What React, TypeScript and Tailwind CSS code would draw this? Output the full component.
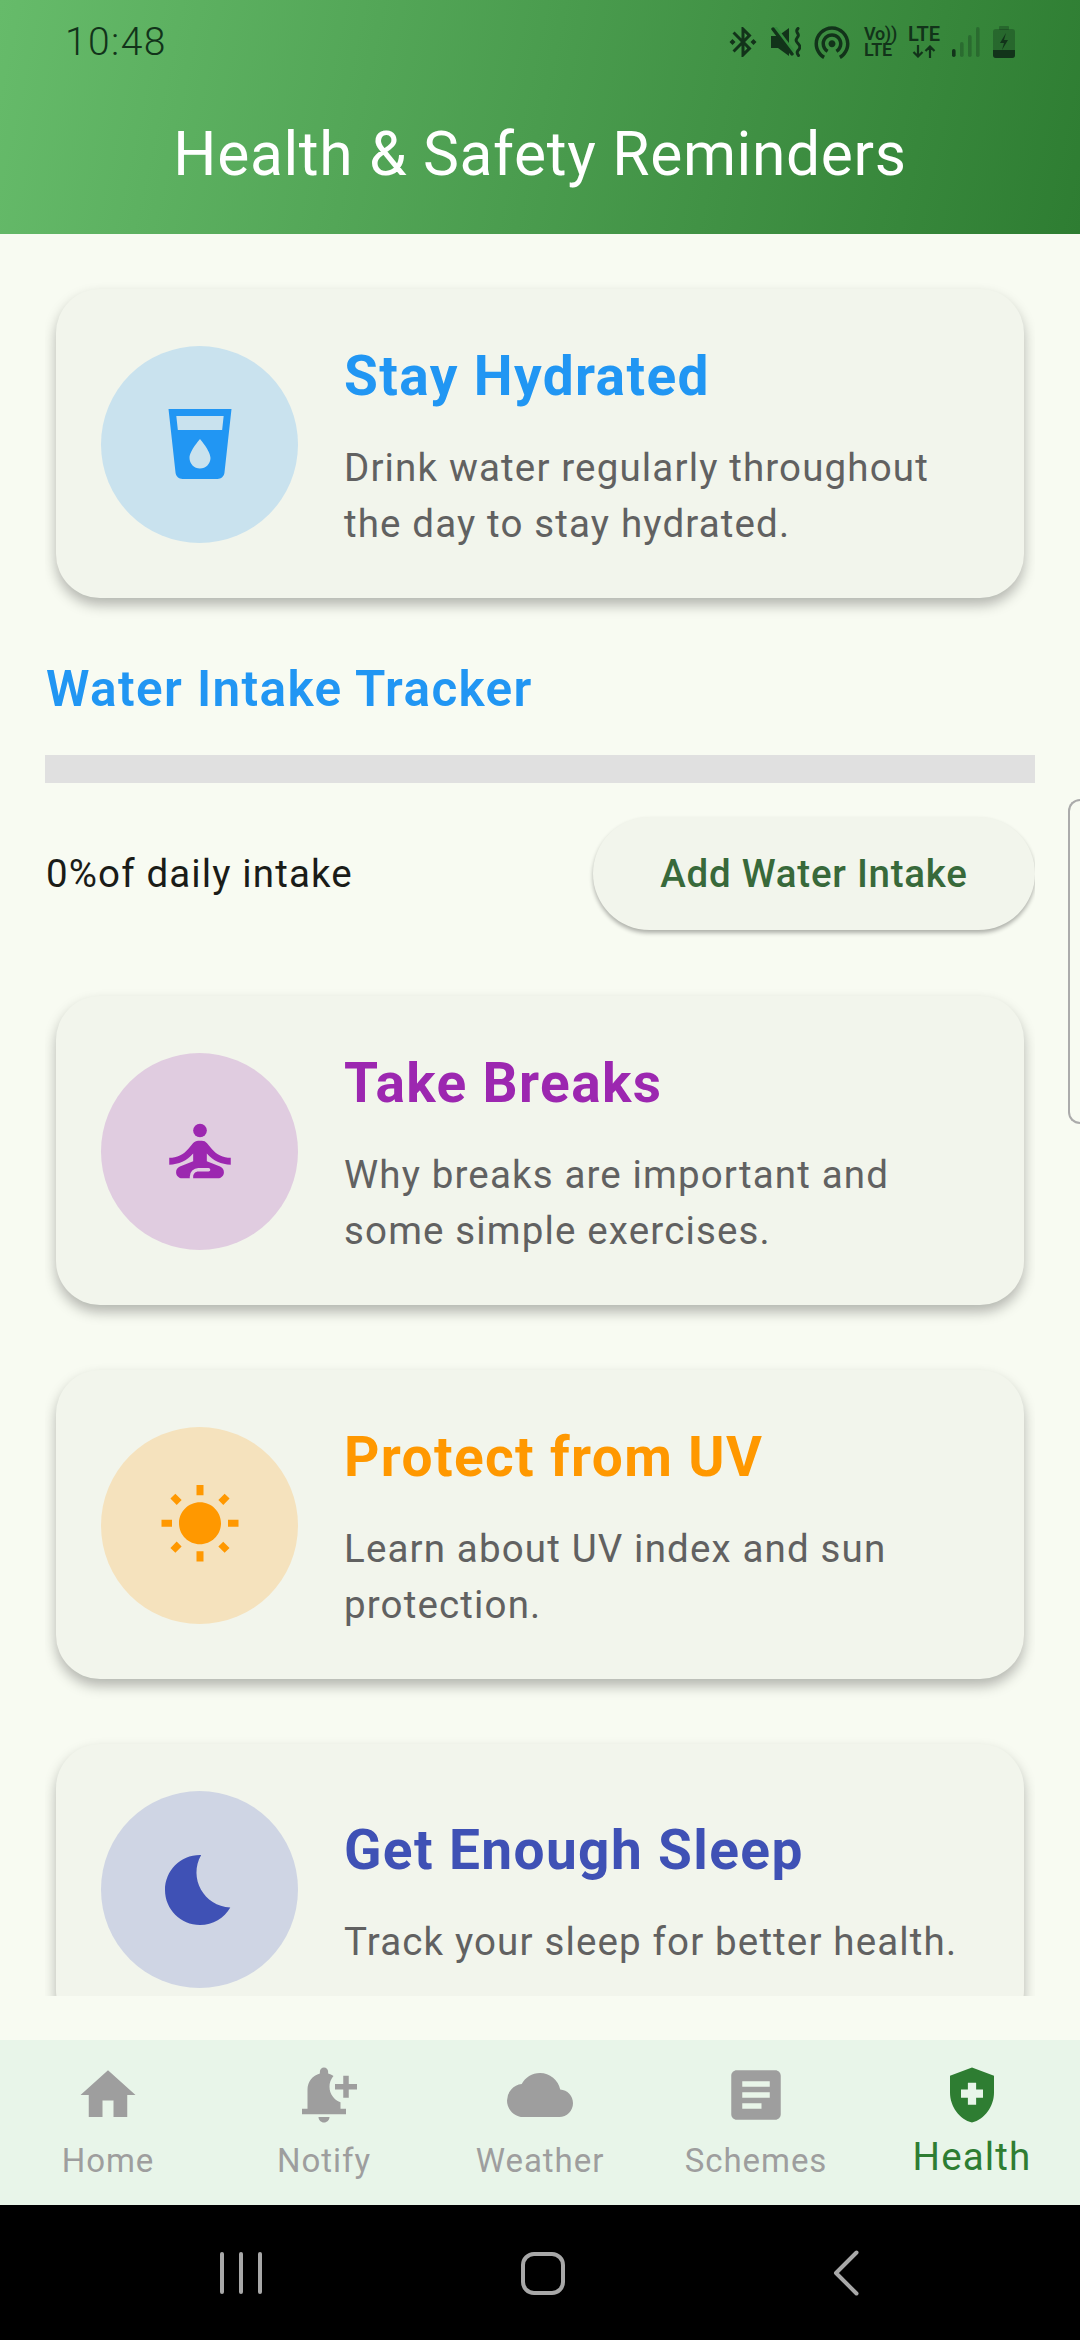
import React from "react";
import {
  MdHome, MdNotificationAdd, MdCloud, MdArticle, MdHealthAndSafety,
  MdLocalDrink, MdSelfImprovement, MdWbSunny, MdBedtime,
  MdBluetoothConnected, MdWifiTethering,
} from "react-icons/md";

type CardProps = {
  icon: React.ReactNode;
  title: string;
  desc: React.ReactNode;
  titleCls: string;
  circleCls: string;
  cls?: string;
};

function ReminderCard({ icon, title, desc, titleCls, circleCls, cls }: CardProps) {
  return (
    <div className={"mx-[11px] rounded-[44px] bg-[#f2f5ec] pl-[45px] pr-[30px] pt-[47px] pb-[46px] flex items-center shadow-[0_7px_13px_rgba(0,0,0,0.28)] " + (cls ?? "")}>
      <div className={"w-[197px] h-[197px] rounded-full shrink-0 flex items-center justify-center " + circleCls}>
        {icon}
      </div>
      <div className="ml-[46px] pt-[8px] min-w-0">
        <div className={"text-[55px] leading-[64px] font-bold tracking-[1.375px] " + titleCls}>{title}</div>
        <div className="mt-[32px] text-[38.5px] leading-[56px] tracking-[1.15px] text-[#616161]">{desc}</div>
      </div>
    </div>
  );
}

function NavItem({ icon, label, active }: { icon: React.ReactNode; label: string; active?: boolean }) {
  return (
    <div className={"flex-1 flex flex-col items-center pt-[22px] " + (active ? "text-[#2e7d32]" : "text-[#9e9e9e]")}>
      {icon}
      <div className={active ? "mt-[9px] text-[38.5px] leading-[40px] tracking-[1.15px]" : "mt-[13px] text-[33px] leading-[40px] tracking-[0.95px]"}>
        {label}
      </div>
    </div>
  );
}

function StatusIcons() {
  return (
    <div className="flex items-center text-[#12331a]">
      <MdBluetoothConnected className="w-[36px] h-[36px]" />
      <svg viewBox="0 0 30 30" className="w-[30px] h-[30px] ml-[10px]">
        <path d="M0 9h7l11-8v28l-11-8H0z" fill="#12331a" />
        <path d="M3 0l19 25" fill="none" stroke="#348a3d" strokeWidth="4.5" />
        <path d="M2 2l19 25" fill="none" stroke="#12331a" strokeWidth="3.4" strokeLinecap="round" />
        <path d="M27 1.5c-4 3.5 2 5 0 8s-3 4 0 7c2 2 3 4 0 7-1 1-1 3 .5 5" fill="none" stroke="#12331a" strokeWidth="3" strokeLinecap="round" />
      </svg>
      <MdWifiTethering className="w-[42px] h-[42px] ml-[10px]" />
      <div className="ml-[11px] w-[32px] text-[18px] leading-[16.5px] font-semibold whitespace-nowrap tracking-[-0.3px]">
        <div>Vo))</div>
        <div>LTE</div>
      </div>
      <div className="ml-[11px] w-[34px] flex flex-col items-center font-semibold">
        <div className="text-[20px] leading-[17px]">LTE</div>
        <svg viewBox="0 0 24 13" className="w-[24px] h-[13px] mt-[2px]">
          <path d="M6 0v11M1.5 7L6 11.5 10.5 7M18 13V2M13.5 6L18 1.5 22.5 6" fill="none" stroke="#12331a" strokeWidth="2.2" />
        </svg>
      </div>
      <svg viewBox="0 0 28 30" className="w-[28px] h-[30px] ml-[11px]">
        <rect x="0" y="22" width="3.6" height="8" rx="1.8" fill="#12331a" />
        <rect x="8" y="15" width="3.6" height="15" rx="1.8" fill="#12331a" opacity="0.3" />
        <rect x="16" y="8" width="3.6" height="22" rx="1.8" fill="#12331a" opacity="0.3" />
        <rect x="24" y="0" width="3.6" height="30" rx="1.8" fill="#12331a" opacity="0.3" />
      </svg>
      <svg viewBox="0 0 22 32" className="w-[22px] h-[32px] ml-[13px]">
        <rect x="6" y="0" width="10" height="4" rx="1" fill="#12331a" opacity="0.35" />
        <rect x="0" y="3" width="22" height="29" rx="3" fill="#12331a" opacity="0.35" />
        <path d="M0 24h22v5a3 3 0 0 1-3 3H3a3 3 0 0 1-3-3z" fill="#12331a" />
        <path d="M13 7l-6 10h4l-2 7 6-10h-4z" fill="#12331a" />
      </svg>
    </div>
  );
}

export default function App() {
  return (
    <div className="relative w-[1080px] h-[2340px] overflow-hidden flex flex-col bg-[#f8fbf2] font-['Roboto',sans-serif]">
      <header className="h-[234px] shrink-0 bg-[linear-gradient(102.2deg,#66bb6a,#2e7d32)] flex flex-col">
        <div className="h-[84px] pl-[65px] pr-[65px] flex items-center justify-between">
          <div className="text-[39px] leading-[46px] text-[#12331a] font-light tracking-[1.4px]">10:48</div>
          <StatusIcons />
        </div>
        <div className="text-center text-white text-[60.5px] leading-[70px] mt-[36px] tracking-[0.66px]">Health &amp; Safety Reminders</div>
      </header>

      <main className="flex-1 min-h-0 p-[44px] px-[45px]">
        <div className="h-full overflow-hidden pt-[11px]">
          <ReminderCard
            icon={<MdLocalDrink className="w-[84px] h-[84px] text-[#2196f3]" />}
            title="Stay Hydrated"
            desc={<>Drink water regularly throughout<br />the day to stay hydrated.</>}
            titleCls="text-[#2196f3]"
            circleCls="bg-[#c9e2ee]"
          />
          <div className="mt-[62px] text-[49.5px] leading-[58px] font-semibold tracking-[1.375px] text-[#2196f3] ml-px">Water Intake Tracker</div>
          <div className="mt-[37px] h-[28px] bg-[#e0e0e0]" />
          <div className="mt-[34px] flex items-center justify-between">
            <div className="text-[38.5px] leading-[46px] tracking-[1.13px] text-[#1a1c18] ml-px">0%of daily intake</div>
            <div className="w-[442px] h-[113px] rounded-full bg-[#f2f5ec] flex items-center justify-center text-[38.5px] font-medium tracking-[0.75px] text-[#38693a] shadow-[0_3px_4px_rgba(0,0,0,0.3)]">
              Add Water Intake
            </div>
          </div>
          <ReminderCard
            cls="mt-[66px]"
            icon={<MdSelfImprovement className="w-[82px] h-[82px] text-[#9c27b0]" />}
            title="Take Breaks"
            desc={<>Why breaks are important and<br />some simple exercises.</>}
            titleCls="text-[#9c27b0]"
            circleCls="bg-[#e0cce0]"
          />
          <ReminderCard
            cls="mt-[65px]"
            icon={<MdWbSunny className="w-[84px] h-[84px] text-[#ff9800]" />}
            title="Protect from UV"
            desc={<>Learn about UV index and sun<br />protection.</>}
            titleCls="text-[#ff9800]"
            circleCls="bg-[#f5e2bd]"
          />
          <ReminderCard
            cls="mt-[65px]"
            icon={<MdBedtime className="w-[84px] h-[84px] text-[#3f51b5]" />}
            title="Get Enough Sleep"
            desc="Track your sleep for better health."
            titleCls="text-[#3f51b5]"
            circleCls="bg-[#cfd5e4]"
          />
        </div>
      </main>

      <nav className="h-[165px] shrink-0 bg-[#e8f5e9] flex">
        <NavItem icon={<MdHome className="w-[66px] h-[66px]" />} label="Home" />
        <NavItem icon={<MdNotificationAdd className="w-[66px] h-[66px]" />} label="Notify" />
        <NavItem icon={<MdCloud className="w-[66px] h-[66px]" />} label="Weather" />
        <NavItem icon={<MdArticle className="w-[66px] h-[66px]" />} label="Schemes" />
        <NavItem icon={<MdHealthAndSafety className="w-[66px] h-[66px]" />} label="Health" active />
      </nav>

      <div className="h-[135px] shrink-0 bg-black relative">
        <div className="absolute left-[220px] top-[47px] w-[42px] h-[42px] flex justify-between">
          <div className="w-[4px] h-full rounded-full bg-[#a8a8a8]" />
          <div className="w-[4px] h-full rounded-full bg-[#a8a8a8]" />
          <div className="w-[4px] h-full rounded-full bg-[#a8a8a8]" />
        </div>
        <div className="absolute left-[521px] top-[47px] w-[44px] h-[43px] rounded-[13px] border-[4px] border-[#a8a8a8]" />
        <svg viewBox="0 0 26 46" className="absolute left-[833px] top-[45px] w-[26px] h-[46px]">
          <path d="M23.5 2.5L3 23l20.5 20.5" fill="none" stroke="#a8a8a8" strokeWidth="4" strokeLinecap="round" strokeLinejoin="round" />
        </svg>
      </div>

      <div className="absolute right-0 top-[799px] w-[12px] h-[325px] rounded-l-[12px] border-2 border-r-0 border-[#ababab]" />
    </div>
  );
}
